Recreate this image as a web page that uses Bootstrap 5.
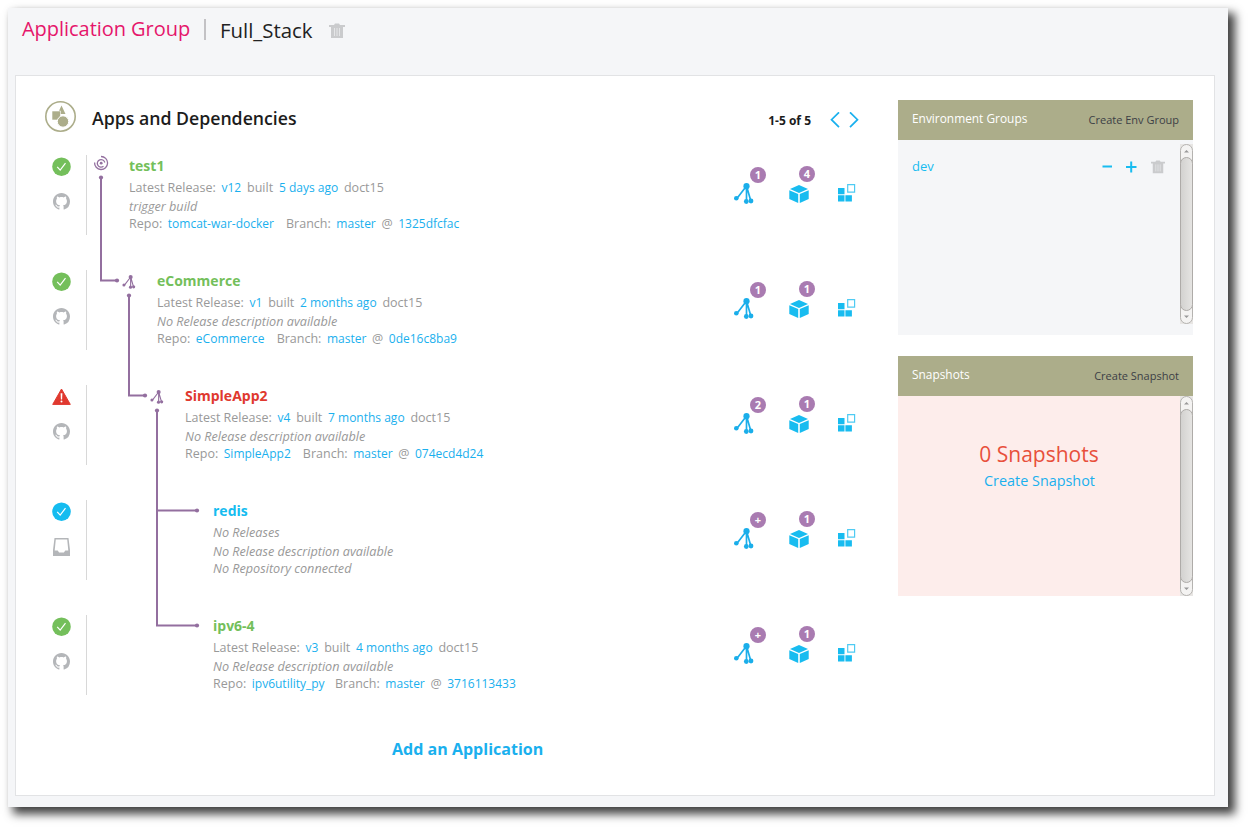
<!DOCTYPE html>
<html lang="en">
<head>
<meta charset="utf-8">
<title>Full_Stack</title>
<link href="https://cdn.jsdelivr.net/npm/bootstrap@5.3.0/dist/css/bootstrap.min.css" rel="stylesheet">
<script src="https://cdn.jsdelivr.net/npm/bootstrap@5.3.0/dist/js/bootstrap.bundle.min.js"></script>
<style>
body{background:#fff;font-family:"Open Sans","Noto Sans",sans-serif;font-size:12.5px;line-height:18px;color:#999;height:830px;overflow:hidden}
a{color:#1ab0ee;text-decoration:none}
.page-shell{margin:8px 23px 23px 8px;height:799px;background:#f5f6f8;box-shadow:6px 6px 9px 1px rgba(0,0,0,.75),0 0 3px rgba(0,0,0,.03);padding:0 13px 0 7px}
.crumbs{height:67px;padding:7px 0 0 7px;font-size:20px;line-height:27px}
.crumb-kind{color:#e5156b;width:168px;white-space:nowrap;letter-spacing:-.04px}
.crumb-bar{width:2px;height:21px;background:#c3c2c5;margin:4px 14px 0 14px}
.crumb-name{color:#222;margin-top:2px;font-size:20.4px}
.crumb-trash{margin:8px 0 0 16px}
.panel-main{width:1200px;height:721px;border:1px solid #e2e3e5;background:#fff;padding:24px 21px 0 29px}
.apps{width:853px;flex:none}
.app-head{height:55px}
.app-title{font-size:17.7px;font-weight:600;color:#1c1c1c;margin:5px 0 0 15px;line-height:26px}
.pager{font-size:12px;color:#1c1c1c;margin:12px 19px 0 0}
.arrows{margin:12px 38px 0 0}
.app-row{height:80px;margin-bottom:35px}
.status{width:42px;height:80px;border-right:1px solid #d8d8d8;padding:2px 0 0 7px}
.status svg{display:block}
.status .src{margin:17px 0 0 1px}
.info{width:450px}
.lv0{margin-left:42px}.lv1{margin-left:70px}.lv2{margin-left:98px}.lv3{margin-left:126px}
.app-name{font-size:14px;font-weight:700;line-height:22px;height:23px}
.ok{color:#74bf5b}.bad{color:#e0392f}.idle{color:#15bcf0}
.ln{display:flex;gap:5.8px;white-space:nowrap;height:19px;line-height:19px}
.ln a{font-size:12px}
.ln i{font-size:12.65px}
.ln3{height:15px;line-height:15px;gap:5.6px}
.ln .g{margin-left:6.500px}
.tree{left:40px;top:55px}
.tools{width:126px;left:689px;top:11px}
.tools svg{display:block}
.pip{width:16px;height:16px;border-radius:8px;background:#a97bb1;color:#fff;font-size:11px;font-weight:700;line-height:16px;text-align:center}
.pip-a{left:16px;top:1px}.pip-b{left:65px;top:0}
.add-app{font-size:16.050px;font-weight:700;width:152px;padding-top:10px;margin:0 0 0 347px;white-space:nowrap}
.side{width:295px}
.side-head{height:40px;background:#acad8a;color:#fff;padding:9px 14px 0;font-size:11.9px}
.side-head a{color:#3c3f46;font-size:11px;margin-top:2px}
.env-body{height:195px;background:#f5f6f8;padding:4px 0 0 14px;margin-bottom:21px}
.env-name{font-size:13px;margin-top:13px;color:#18bcf0}
.env-tools{margin:16px 14px 0 auto}
.snap-body{height:200px;background:#fdedeb}
.snap-count{font-size:21px;line-height:28px;color:#e8503c;margin-top:44px}
.snap-new{font-size:14.4px;line-height:20px;margin:3px 0 0 1px}
</style>
</head>
<body>
<svg width="0" height="0" class="position-absolute">
<defs>
<symbol id="check" viewBox="0 0 19 19"><circle cx="9.5" cy="9.7" r="9.300" fill="currentColor"/><path d="M5.2 9.8l3 3.300 5.300-7" fill="none" stroke="#fff" stroke-width="1.2"/></symbol>
<symbol id="warn" viewBox="0 0 19 19"><path d="M9.500 2L18.300 17.400H.7z" fill="currentColor" stroke="currentColor" stroke-width="1" stroke-linejoin="round"/><path d="M8.600 6.300h1.800l-.3 6.200H8.900z" fill="#fff"/><circle cx="9.5" cy="14.600" r="1" fill="#fff"/></symbol>
<symbol id="cat" viewBox="0 0 16 16"><path fill="#b4b6b9" d="M8 0C3.58 0 0 3.58 0 8c0 3.54 2.29 6.53 5.47 7.59.4.07.55-.17.55-.38 0-.19-.01-.82-.01-1.49-2.01.37-2.53-.49-2.69-.94-.09-.23-.48-.94-.82-1.13-.28-.15-.68-.52-.01-.53.63-.01 1.08.58 1.23.82.72 1.21 1.87.87 2.33.66.07-.52.28-.87.51-1.07-1.78-.2-3.64-.89-3.64-3.95 0-.87.31-1.59.82-2.15-.08-.2-.36-1.02.08-2.12 0 0 .67-.21 2.2.82.64-.18 1.32-.27 2-.27s1.36.09 2 .27c1.53-1.04 2.2-.82 2.2-.82.44 1.1.16 1.92.08 2.12.51.56.82 1.27.82 2.15 0 3.07-1.87 3.75-3.65 3.95.29.25.54.73.54 1.48 0 1.07-.01 1.93-.01 2.2 0 .21.15.46.55.38A8.01 8.01 0 0 0 16 8c0-4.42-3.58-8-8-8z"/></symbol>
<symbol id="inbox" viewBox="0 0 19 19"><path d="M2.5 1h14l1.500 12v6H1v-6z" fill="#b4b6b9"/><path d="M3.800 2.400h11.400l1.100 11.100h-3l-1.400 2H7.100l-1.400-2h-3z" fill="#fff"/></symbol>
<symbol id="nodes" viewBox="0 0 20 22"><path d="M12.500 3L2.500 16M12.500 3V19M12.500 3l4.500 15.500" fill="none" stroke="currentColor" stroke-width="1.700"/><g fill="currentColor"><circle cx="12.500" cy="3.200" r="3.100"/><circle cx="2.300" cy="15.200" r="2.300"/><circle cx="12.300" cy="18.500" r="2.400"/><circle cx="17" cy="18" r="2.400"/></g></symbol>
<symbol id="cube" viewBox="0 0 20 18"><path fill="#18bcf0" d="M10 0l9 4-9 4-9-4zM.3 5.300L9.200 9v9L.3 14zM19.700 5.300L10.800 9v9l8.900-4z"/></symbol>
<symbol id="blocks" viewBox="0 0 18 18"><path fill="#18bcf0" d="M0 4h6.500v6.300H0zM0 11.200h6.500v6.300H0zM7.400 11.200h6.500v6.300H7.400z"/><path d="M9.700.7h6.900v7.500H9.700z" fill="#fff" stroke="#4fcbf3" stroke-width="1.200"/></symbol>
<symbol id="trash" viewBox="0 0 16 16"><path d="M0 2h5l1-1.500h4L11 2h5v2h-2v11H2V4H0z" fill="#cacbcd"/><path d="M5.500 5v8M8 5v8M10.500 5v8" stroke="#e4e5e7" stroke-width="1"/></symbol>
<symbol id="tools" viewBox="0 0 126 42"><g color="#1aaeea"><use href="#nodes" x="0" y="17" width="20" height="22"/></g><use href="#cube" x="55" y="19" width="20" height="18"/><use href="#blocks" x="104" y="18" width="18" height="18"/></symbol>
<linearGradient id="thumb"><stop offset="0" stop-color="#d2d1cf"/><stop offset="1" stop-color="#e6e5e3"/></linearGradient>
</defs>
</svg>
<main class="page-shell">
<header class="crumbs d-flex"><span class="crumb-kind">Application Group</span><span class="crumb-bar"></span><span class="crumb-name">Full_Stack</span><svg width="16" height="16" class="crumb-trash"><use href="#trash"/></svg></header>
<section class="panel-main d-flex">
<div class="apps position-relative">
<div class="app-head d-flex"><svg width="32" height="32" viewBox="0 0 32 32"><circle cx="15.5" cy="16.5" r="14.7" fill="none" stroke="#acad8a" stroke-width="1.600"/><g fill="#acad8a"><path d="M16.500 5.500l4 8.500h-8z"/><path d="M7 11h8.500v9H7z" stroke="#fff" stroke-width=".6"/><circle cx="18" cy="21.500" r="5.700" stroke="#fff" stroke-width="1"/></g></svg>
<h1 class="app-title">Apps and Dependencies</h1>
<div class="ms-auto d-flex"><b class="pager">1-5 of 5</b><svg width="30" height="16" class="arrows" viewBox="0 0 30 16"><path d="M9 .3L1.500 7.700 9 15.200M20 .3L27.500 7.700 20 15.200" fill="none" stroke="#1ab0ee" stroke-width="1.700"/></svg></div></div>
<svg class="tree position-absolute" width="120" height="490" viewBox="85 155 120 490"><path d="M101 178V280.500H117M129 296V395.500H145M157 411V625.500H197M157 510.500H197" fill="none" stroke="#936f9f" stroke-width="2"/><g fill="#936f9f"><circle cx="101" cy="177.500" r="2.100"/><circle cx="117" cy="280.500" r="2.100"/><circle cx="129" cy="295.500" r="2.100"/><circle cx="145" cy="395.500" r="2.100"/><circle cx="157" cy="410.500" r="2.100"/><circle cx="197" cy="510.500" r="2.100"/><circle cx="197" cy="625.500" r="2.100"/></g>
<path d="M94.600 162.500A6.500 6.500 0 1 0 101 156.500M103.500 166.300A3.800 3.800 0 1 1 104.800 162.500" fill="none" stroke="#936f9f" stroke-width="1.300"/><circle cx="101.200" cy="163.200" r="1.400" fill="#936f9f"/>
<g color="#936f9f"><use href="#nodes" x="122" y="275" width="14" height="14.500"/><use href="#nodes" x="150" y="390" width="14" height="14.500"/></g></svg>

<article class="app-row d-flex position-relative"><div class="status"><svg class="ok" width="19" height="19"><use href="#check"/></svg><svg width="17" height="17" class="src"><use href="#cat"/></svg></div>
<div class="info lv0"><div class="app-name ok">test1</div><div class="ln"><span>Latest Release:</span><a href="#">v12</a><span>built</span><a href="#">5 days ago</a><span>doct15</span></div><div class="ln"><i>trigger build</i></div><div class="ln ln3"><span>Repo:</span><a href="#">tomcat-war-docker</a><span class="g">Branch:</span><a href="#">master</a><span>@</span><a href="#">1325dfcfac</a></div></div>
<div class="tools position-absolute"><svg width="126" height="42"><use href="#tools"/></svg><span class="pip pip-a position-absolute">1</span><span class="pip pip-b position-absolute">4</span></div></article>

<article class="app-row d-flex position-relative"><div class="status"><svg class="ok" width="19" height="19"><use href="#check"/></svg><svg width="17" height="17" class="src"><use href="#cat"/></svg></div>
<div class="info lv1"><div class="app-name ok">eCommerce</div><div class="ln"><span>Latest Release:</span><a href="#">v1</a><span>built</span><a href="#">2 months ago</a><span>doct15</span></div><div class="ln"><i>No Release description available</i></div><div class="ln ln3"><span>Repo:</span><a href="#" style="letter-spacing:.1px">eCommerce</a><span class="g">Branch:</span><a href="#">master</a><span>@</span><a href="#">0de16c8ba9</a></div></div>
<div class="tools position-absolute"><svg width="126" height="42"><use href="#tools"/></svg><span class="pip pip-a position-absolute">1</span><span class="pip pip-b position-absolute">1</span></div></article>

<article class="app-row d-flex position-relative"><div class="status"><svg class="bad" width="19" height="19"><use href="#warn"/></svg><svg width="17" height="17" class="src"><use href="#cat"/></svg></div>
<div class="info lv2"><div class="app-name bad">SimpleApp2</div><div class="ln"><span>Latest Release:</span><a href="#">v4</a><span>built</span><a href="#">7 months ago</a><span>doct15</span></div><div class="ln"><i>No Release description available</i></div><div class="ln ln3"><span>Repo:</span><a href="#">SimpleApp2</a><span class="g">Branch:</span><a href="#">master</a><span>@</span><a href="#">074ecd4d24</a></div></div>
<div class="tools position-absolute"><svg width="126" height="42"><use href="#tools"/></svg><span class="pip pip-a position-absolute">2</span><span class="pip pip-b position-absolute">1</span></div></article>

<article class="app-row d-flex position-relative"><div class="status"><svg class="idle" width="19" height="19"><use href="#check"/></svg><svg width="19" height="19" style="margin-top:16px"><use href="#inbox"/></svg></div>
<div class="info lv3"><div class="app-name idle">redis</div><div class="ln"><i>No Releases</i></div><div class="ln"><i>No Release description available</i></div><div class="ln ln3"><i>No Repository connected</i></div></div>
<div class="tools position-absolute"><svg width="126" height="42"><use href="#tools"/></svg><span class="pip pip-a position-absolute">+</span><span class="pip pip-b position-absolute">1</span></div></article>

<article class="app-row d-flex position-relative"><div class="status"><svg class="ok" width="19" height="19"><use href="#check"/></svg><svg width="17" height="17" class="src"><use href="#cat"/></svg></div>
<div class="info lv3"><div class="app-name ok">ipv6-4</div><div class="ln"><span>Latest Release:</span><a href="#">v3</a><span>built</span><a href="#">4 months ago</a><span>doct15</span></div><div class="ln"><i>No Release description available</i></div><div class="ln ln3"><span>Repo:</span><a href="#">ipv6utility_py</a><span class="g" style="margin-left:4.8px">Branch:</span><a href="#">master</a><span>@</span><a href="#">3716113433</a></div></div>
<div class="tools position-absolute"><svg width="126" height="42"><use href="#tools"/></svg><span class="pip pip-a position-absolute">+</span><span class="pip pip-b position-absolute">1</span></div></article>
<div class="add-app"><a href="#">Add an Application</a></div>
</div>
<aside class="side">
<div class="side-head d-flex justify-content-between align-items-start"><span>Environment Groups</span><a href="#">Create Env Group</a></div>
<div class="env-body d-flex align-items-start"><a href="#" class="env-name">dev</a>
<svg class="env-tools" width="64" height="14" viewBox="0 0 64 14"><path d="M.5 6.500h9.500M24 7h10.500M29.200 1.500v11" stroke="#18bcf0" stroke-width="2"/><use href="#trash" x="49" y="0" width="14" height="14"/></svg>
<svg width="13" height="180" viewBox="0 0 13 180"><path fill="#e8e6e4" d="M0 0h13v180H0z"/><rect x=".5" y=".5" width="12" height="179" rx="6" fill="#f4f3f2" stroke="#b5b3b0"/><rect x=".5" y="13.500" width="12" height="153" rx="6" fill="url(#thumb)" stroke="#aeaba8"/><path d="M4 8.500l2.500-2.500L9 8.500zM4 171.500l2.500 2.500L9 171.500z" fill="#999"/></svg></div>
<div class="side-head d-flex justify-content-between align-items-start"><span>Snapshots</span><a href="#">Create Snapshot</a></div>
<div class="snap-body d-flex"><div class="flex-fill text-center"><div class="snap-count">0 Snapshots</div><div class="snap-new"><a href="#">Create Snapshot</a></div></div>
<svg width="13" height="200" viewBox="0 0 13 200"><path fill="#e8e6e4" d="M0 0h13v200H0z"/><rect x=".5" y=".5" width="12" height="199" rx="6" fill="#f4f3f2" stroke="#b5b3b0"/><rect x=".5" y="13.500" width="12" height="173" rx="6" fill="url(#thumb)" stroke="#aeaba8"/><path d="M4 8.500l2.500-2.500L9 8.500zM4 191.500l2.500 2.500L9 191.500z" fill="#999"/></svg></div>
</aside>
</section>
</main>
</body>
</html>
